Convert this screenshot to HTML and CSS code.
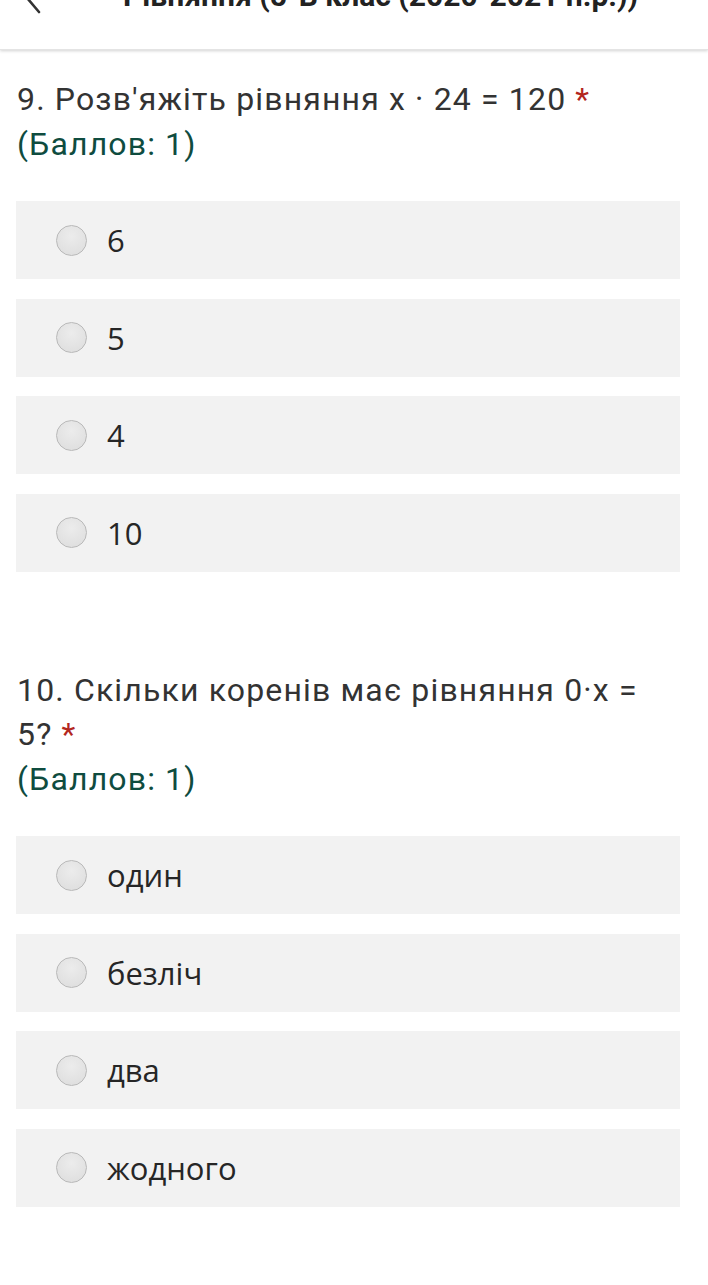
FILE: index.html
```html
<!DOCTYPE html>
<html lang="uk">
<head>
<meta charset="utf-8">
<title>Рівняння</title>
<link rel="stylesheet" href="styles.css">
</head>
<body>
<header class="topbar">
  <div class="topbar-inner">
    <svg class="back" width="30" height="20" viewBox="0 0 30 20"><path d="M4 -8 L21 12" fill="none" stroke="#333" stroke-width="2.6" stroke-linecap="round"/></svg>
    <div class="title">Рівняння (5-В клас (2020-2021 н.р.))</div>
  </div>
</header>
<main class="content">
  <section class="question">
    <div class="q-text">9. Розв'яжіть рівняння x · 24 = 120 <span class="req">*</span></div>
    <div class="points">(Баллов: 1)</div>
    <div class="options">
      <div class="option"><span class="radio"></span><span class="label">6</span></div>
      <div class="option"><span class="radio"></span><span class="label">5</span></div>
      <div class="option"><span class="radio"></span><span class="label">4</span></div>
      <div class="option"><span class="radio"></span><span class="label">10</span></div>
    </div>
  </section>
  <section class="question second">
    <div class="q-text">10. Скільки коренів має рівняння 0·x = 5?&nbsp;<span class="req">*</span></div>
    <div class="points">(Баллов: 1)</div>
    <div class="options">
      <div class="option"><span class="radio"></span><span class="label">один</span></div>
      <div class="option"><span class="radio"></span><span class="label">безліч</span></div>
      <div class="option"><span class="radio"></span><span class="label">два</span></div>
      <div class="option"><span class="radio"></span><span class="label">жодного</span></div>
    </div>
  </section>
</main>
</body>
</html>
```
FILE: styles.css
```css
html, body {
  margin: 0;
  padding: 0;
  background: #ffffff;
}
body {
  width: 708px;
  height: 1285px;
  overflow: hidden;
  font-family: Roboto, "Liberation Sans", sans-serif;
}
.topbar {
  height: 49px;
  background: #fff;
  box-shadow: 0 1px 3px rgba(0,0,0,0.18);
  border-bottom: 1px solid #e4e4e4;
  overflow: hidden;
}
.topbar-inner {
  display: flex;
  align-items: flex-start;
  margin-top: -22px;
}
.back {
  margin-left: 18px;
  margin-top: 22px;
  flex: none;
}
.title {
  margin-left: 75px;
  font-family: Roboto, "Liberation Sans", sans-serif;
  font-weight: 700;
  font-size: 30px;
  line-height: 36px;
  color: #222;
  white-space: nowrap;
}
.content {
  padding: 0 28px 0 16px;
}
.question {
  padding-top: 27px;
}
.question.second {
  padding-top: 96px;
}
.q-text, .points {
  font-size: 32px;
  line-height: 44.5px;
  letter-spacing: 1.15px;
  color: #333;
  padding-left: 1px;
}
.req {
  color: #b3261e;
  letter-spacing: 0;
}
.points {
  color: #0f4c3f;
}
.options {
  margin-top: 35px;
  display: flex;
  flex-direction: column;
  gap: 19.5px;
}
.option {
  height: 78px;
  background: #f2f2f2;
  display: flex;
  align-items: center;
}
.radio {
  width: 29px;
  height: 29px;
  border-radius: 50%;
  border: 1px solid #b9b9b9;
  background: radial-gradient(circle at 50% 35%, #ececec 0%, #dcdcdc 100%);
  margin-left: 40px;
  flex: none;
}
.label {
  margin-left: 20px;
  font-family: "Open Sans", "Noto Sans", sans-serif;
  font-size: 31px;
  color: #262626;
}
```
